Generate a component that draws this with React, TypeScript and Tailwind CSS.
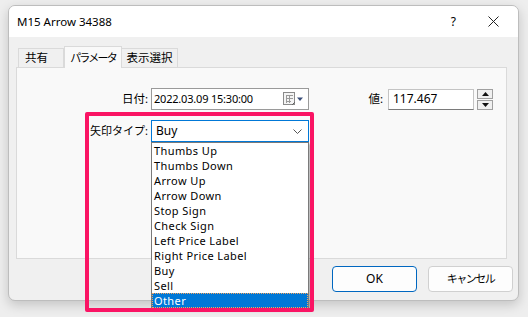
import React from "react";

const items = [
  "Thumbs Up",
  "Thumbs Down",
  "Arrow Up",
  "Arrow Down",
  "Stop Sign",
  "Check Sign",
  "Left Price Label",
  "Right Price Label",
  "Buy",
  "Sell",
  "Other",
];

const font = { fontFamily: '"Noto Sans", "Noto Sans CJK JP", sans-serif' };

export default function App() {
  return (
    <div
      className="relative w-[528px] h-[317px] overflow-hidden bg-[#eeeeee] text-[11px] text-[#000] whitespace-nowrap"
      style={font}
    >
      {/* WINDOW */}
      <div className="absolute left-[8px] top-[5px] w-[511px] h-[296px] rounded-[7px] border border-[#bdbdbd] bg-[#f0f0f0] shadow-[0_4px_12px_rgba(0,0,0,0.18)] overflow-hidden flex flex-col">
        {/* TITLE BAR */}
        <div className="h-[31px] bg-white flex items-center pl-[8px] shrink-0">
          <span className="text-[11.5px] leading-none">M15 Arrow 34388</span>
          <span className="ml-auto mr-[32px] text-[12px] leading-none">?</span>
          <svg width="11" height="11" viewBox="0 0 11 11" className="mr-[19px]">
            <path d="M0.5 0.5 L10.5 10.5 M10.5 0.5 L0.5 10.5" stroke="#222" strokeWidth="1" />
          </svg>
        </div>

        {/* TABS */}
        <div className="flex items-end pl-[9px] pt-[8px] h-[30px] shrink-0 text-[11.5px]">
          <div className="w-[46px] h-[19px] border border-b-0 border-[#dadada] bg-[#f0f0f0] flex items-center pl-[6px] leading-none">
            共有
          </div>
          <div className="w-[58px] h-[22px] border border-b-0 border-[#dadada] bg-[#f9f9f9] flex items-center justify-center leading-none -mb-px relative z-10 text-[11px] tracking-[-1.8px]">
            パラメータ
          </div>
          <div className="w-[56px] h-[19px] border border-b-0 border-l-0 border-[#dadada] bg-[#f0f0f0] flex items-center justify-center leading-none">
            表示選択
          </div>
        </div>

        {/* PANEL */}
        <div className="ml-[7px] w-[491px] h-[192px] border border-[#dadada] bg-[#f9f9f9] pt-[20px] shrink-0">
          <div className="flex items-center h-[22px]">
            <div className="w-[131px] text-right text-[11.5px]">日付:</div>
            <div className="ml-[3px] w-[158px] h-[22px] border border-[#9a9a9a] bg-white flex items-center pl-[2px]">
              <span className="tracking-[-0.2px]">2022.03.09 15:30:00</span>
              <svg width="20" height="14" viewBox="0 0 20 14" className="ml-auto mr-[5px]">
                <rect x="0.5" y="0.5" width="11" height="12" fill="#f4f4f4" stroke="#8a8a8a" />
                <path d="M3 3.5H10M3 6.5H10M3 9.5H8M3.5 3V11M6.5 3V11" stroke="#9a9a9a" strokeWidth="1" />
                <path d="M9 13L12 10" stroke="#666" />
                <path d="M14 5.5H20L17 9Z" fill="#3b4f7a" />
              </svg>
            </div>
            <div className="w-[74px] text-right text-[11.5px]">値:</div>
            <div className="ml-[5px] w-[86px] h-[21px] border border-[#c4c4c4] border-b-[#7a7a7a] bg-white flex items-center pl-[4px] text-[12px]">
              117.467
            </div>
            <div className="ml-[3px] w-[16px] h-[21px] flex flex-col gap-px">
              <div className="flex-1 border border-[#a0a0a0] bg-[#f0f0f0] flex items-center justify-center">
                <svg width="7" height="4" viewBox="0 0 7 4"><path d="M0 4H7L3.5 0Z" fill="#111" /></svg>
              </div>
              <div className="flex-1 border border-[#a0a0a0] bg-[#f0f0f0] flex items-center justify-center">
                <svg width="7" height="4" viewBox="0 0 7 4"><path d="M0 0H7L3.5 4Z" fill="#111" /></svg>
              </div>
            </div>
          </div>

          <div className="flex items-center h-[22px] mt-[10px]">
            <div className="w-[131px] text-right text-[11px]">矢印タイプ:</div>
            <div className="ml-[3px] w-[158px] h-[22px] border border-[#0078d7] bg-white flex items-center pl-[4px] text-[12px]">
              <span>Buy</span>
              <svg width="9" height="5" viewBox="0 0 9 5" className="ml-auto mr-[6px]">
                <path d="M0.5 0.5L4.5 4.5L8.5 0.5" stroke="#555" fill="none" strokeWidth="1" />
              </svg>
            </div>
          </div>
        </div>

        {/* BUTTONS */}
        <div className="flex justify-end gap-[11px] pr-[5px] mt-[7px]">
          <button className="w-[85px] h-[26px] rounded-[4px] border border-[#0067c0] bg-[#fdfdfd] text-[12px]">
            OK
          </button>
          <button className="w-[85px] h-[26px] rounded-[4px] border border-[#d0d0d0] bg-[#fdfdfd] text-[11px] tracking-[-1.5px]">
            キャンセル
          </button>
        </div>
      </div>

      {/* DROPDOWN LIST */}
      <div className="absolute left-[151px] top-[142px] w-[158px] border border-[#7a7a7a] bg-white shadow-[2px_2px_2px_rgba(0,0,0,0.25)] text-[11px] tracking-[0.4px]">
        {items.map((it) => (
          <div
            key={it}
            className={
              it === "Other"
                ? "h-[15px] leading-[15px] pl-[2px] bg-[#0078d7] text-white outline outline-1 outline-dotted outline-[#f4a460] -outline-offset-1"
                : "h-[15px] leading-[15px] pl-[2px]"
            }
          >
            {it}
          </div>
        ))}
      </div>

      {/* HIGHLIGHT FRAME */}
      <div className="absolute left-[85px] top-[112px] w-[229px] h-[200px] border-[4px] border-[#fa1464] rounded-[2px] pointer-events-none" />
    </div>
  );
}
